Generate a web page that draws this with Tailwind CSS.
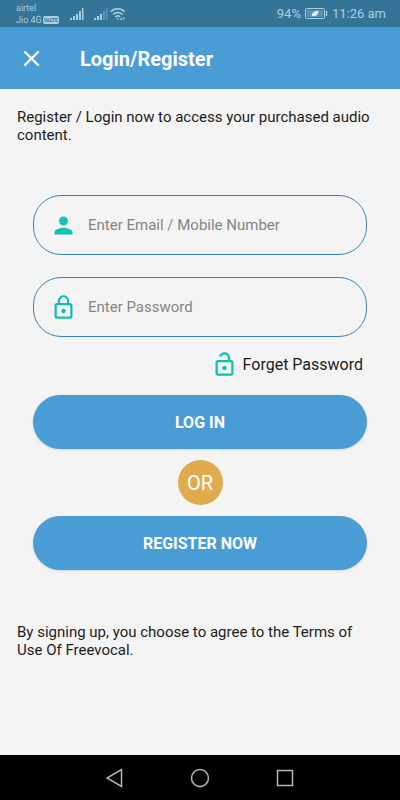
<!DOCTYPE html>
<html lang="en">
<head>
    <meta charset="UTF-8">
    <meta name="viewport" content="width=device-width, initial-scale=1.0">
    <title>Login/Register | Freevocal</title>
    <!-- Tailwind CSS -->
    <script src="https://cdn.jsdelivr.net/npm/@tailwindcss/browser@4"></script>
</head>
<body class="flex min-h-screen flex-col bg-[#f4f4f4] font-[Roboto,sans-serif] text-[#1c1c1c]">

<!-- Status bar -->
<div class="flex h-[27px] items-center justify-between bg-[#337497] pr-[14px] pl-4 text-[#a9cfe2]">
    <div class="flex items-center">
        <div class="w-[54px] text-[9px] leading-[12px]">
            <div>airtel</div>
            <div class="flex items-center gap-px whitespace-nowrap">Jio 4G
                <span class="rounded-xs bg-[#a9cfe2] px-px text-[5px] leading-[8px] font-bold text-[#337497]">VoLTE</span>
            </div>
        </div>
        <svg class="h-[14px] w-[14px]" viewBox="0 0 14 14" fill="currentColor">
            <path d="M0 11h2v2H0zM3 9h2v4H3zM6 7h2v6H6zM9 4h2v9H9zM12 1h1.500v12H12z"/>
        </svg>
        <svg class="ml-[10px] h-[14px] w-[14px]" viewBox="0 0 14 14" fill="currentColor">
            <path d="M0 11h2v2H0zM3 9h2v4H3zM6 7h2v6H6z"/>
            <path d="M9 4h2v9H9zM12 1h1.500v12H12z" opacity=".35"/>
        </svg>
        <svg class="ml-[2px] h-[14px] w-[16px]" viewBox="0 0 16 14" fill="none" stroke="currentColor" stroke-width="1.500">
            <path d="M.8 4.800a9.500 9.500 0 0 1 13.900 0M3 7.500a6.700 6.700 0 0 1 9.500 0M5.200 10a3.700 3.700 0 0 1 5 0"/>
            <path d="M6.500 11.500h2.400l-1.200 1.700zM10 13l1.200-2.600 1.200 2.600zM12.500 10.500h2.600l-1.300 2.600z" fill="currentColor" stroke="none"/>
        </svg>
    </div>
    <div class="flex items-center gap-1 text-[13px]">
        <span>94%</span>
        <svg class="h-[11px] w-[23px]" viewBox="0 0 23 11" fill="none" stroke="currentColor">
            <rect x=".5" y=".5" width="19" height="10" rx="1"/>
            <rect x="2" y="2" width="16" height="7" fill="currentColor" stroke="none" opacity=".35"/>
            <path d="M7 8c-.5-3 2-5 6.500-5.500C13.500 6.500 11 9 7 8z" fill="#e0f1f8" stroke="none"/>
            <path d="M21.500 3v5" stroke-width="1.500"/>
        </svg>
        <span>11:26 am</span>
    </div>
</div>

<header class="flex h-[62px] items-center bg-[#4a9cd4] px-[15px] text-white">
    <button type="button" aria-label="Close" class="flex h-8 w-8 items-center justify-center">
        <svg class="h-[27px] w-[27px]" viewBox="0 0 24 24" fill="currentColor">
            <path d="M19 6.410L17.590 5 12 10.590 6.410 5 5 6.410 10.590 12 5 17.590 6.410 19 12 13.410 17.590 19 19 17.590 13.410 12z"/>
        </svg>
    </button>
    <h1 class="ml-[33px] pt-px text-xl font-bold">Login/Register</h1>
</header>

<main class="flex-1 px-[17px] pt-[19px]">
    <p class="pr-3 text-[15px] leading-[18px]">Register / Login now to access your purchased audio content.</p>

    <form class="mx-4 mt-[51px]">
        <!-- Email / mobile -->
        <label class="flex h-[60px] items-center gap-[11px] rounded-[28px] border border-[#3a84b4] px-4">
            <svg class="h-[27px] w-[27px] shrink-0 text-[#10c4b0]" viewBox="0 0 24 24" fill="currentColor">
                <path d="M12 12c2.210 0 4-1.790 4-4s-1.790-4-4-4-4 1.790-4 4 1.790 4 4 4zm0 2c-2.670 0-8 1.340-8 4v2h16v-2c0-2.660-5.330-4-8-4z"/>
            </svg>
            <input type="text" name="username" aria-label="Email or mobile number" placeholder="Enter Email / Mobile Number" class="min-w-0 flex-1 pt-px text-[15px] outline-none placeholder:text-[#858585]">
        </label>

        <!-- Password -->
        <label class="mt-[22px] flex h-[60px] items-center gap-[11px] rounded-[28px] border border-[#3a84b4] px-4">
            <svg class="h-[27px] w-[27px] shrink-0 text-[#10bfae]" viewBox="0 0 24 24" fill="currentColor">
                <path d="M12 17c1.100 0 2-.9 2-2s-.9-2-2-2-2 .9-2 2 .9 2 2 2zm6-9h-1V6c0-2.760-2.240-5-5-5S7 3.240 7 6v2H6c-1.100 0-2 .9-2 2v10c0 1.100.9 2 2 2h12c1.100 0 2-.9 2-2V10c0-1.100-.9-2-2-2zM8.900 6c0-1.710 1.390-3.100 3.100-3.100s3.100 1.390 3.100 3.100v2H8.900V6zM18 20H6V10h12v10z"/>
            </svg>
            <input type="password" name="password" aria-label="Password" placeholder="Enter Password" class="min-w-0 flex-1 pt-px text-[15px] outline-none placeholder:text-[#858585]">
        </label>

        <div class="mt-[14px] flex justify-end pr-1">
            <a href="#" class="flex items-center gap-[5px] text-base">
                <svg class="h-[27px] w-[27px] text-[#10bfae]" viewBox="0 0 24 24" fill="currentColor">
                    <path d="M12 17c1.100 0 2-.9 2-2s-.9-2-2-2-2 .9-2 2 .9 2 2 2zm6-9h-1V6c0-2.760-2.240-5-5-5-2.280 0-4.270 1.540-4.840 3.750l1.940.5C9.440 3.930 10.630 3 12 3c1.650 0 3 1.350 3 3v2H6c-1.100 0-2 .9-2 2v10c0 1.100.9 2 2 2h12c1.100 0 2-.9 2-2V10c0-1.100-.9-2-2-2zm0 12H6V10h12v10z"/>
                </svg>
                Forget Password
            </a>
        </div>

        <button type="submit" class="mt-[17px] h-[54px] w-full rounded-full bg-[#4a9cd4] pt-px text-base font-bold text-white shadow">LOG IN</button>
        <div class="mx-auto my-[11px] flex h-[45px] w-[45px] items-center justify-center rounded-full bg-[#dfab4c] text-xl text-white">OR</div>
        <button type="button" class="h-[54px] w-full rounded-full bg-[#4a9cd4] pt-px text-base font-bold text-white shadow">REGISTER NOW</button>
    </form>

    <p class="mt-[53px] pr-3 text-[15px] leading-[18px]">By signing up, you choose to agree to the Terms of Use Of Freevocal.</p>
</main>

<!-- System navigation -->
<nav class="flex h-[45px] items-center justify-center gap-[61px] bg-black text-[#b5b5b5]">
    <button type="button" aria-label="Back">
        <svg class="h-6 w-6" viewBox="0 0 24 24" fill="none" stroke="currentColor" stroke-width="1.500"><path d="M18.500 3.500v17L4 12z"/></svg>
    </button>
    <button type="button" aria-label="Home">
        <svg class="h-6 w-6" viewBox="0 0 24 24" fill="none" stroke="currentColor" stroke-width="1.500"><circle cx="12" cy="12" r="8.500"/></svg>
    </button>
    <button type="button" aria-label="Recent apps">
        <svg class="h-6 w-6" viewBox="0 0 24 24" fill="none" stroke="currentColor" stroke-width="1.500"><path d="M4.500 4.500h15v15h-15z"/></svg>
    </button>
</nav>

</body>
</html>
